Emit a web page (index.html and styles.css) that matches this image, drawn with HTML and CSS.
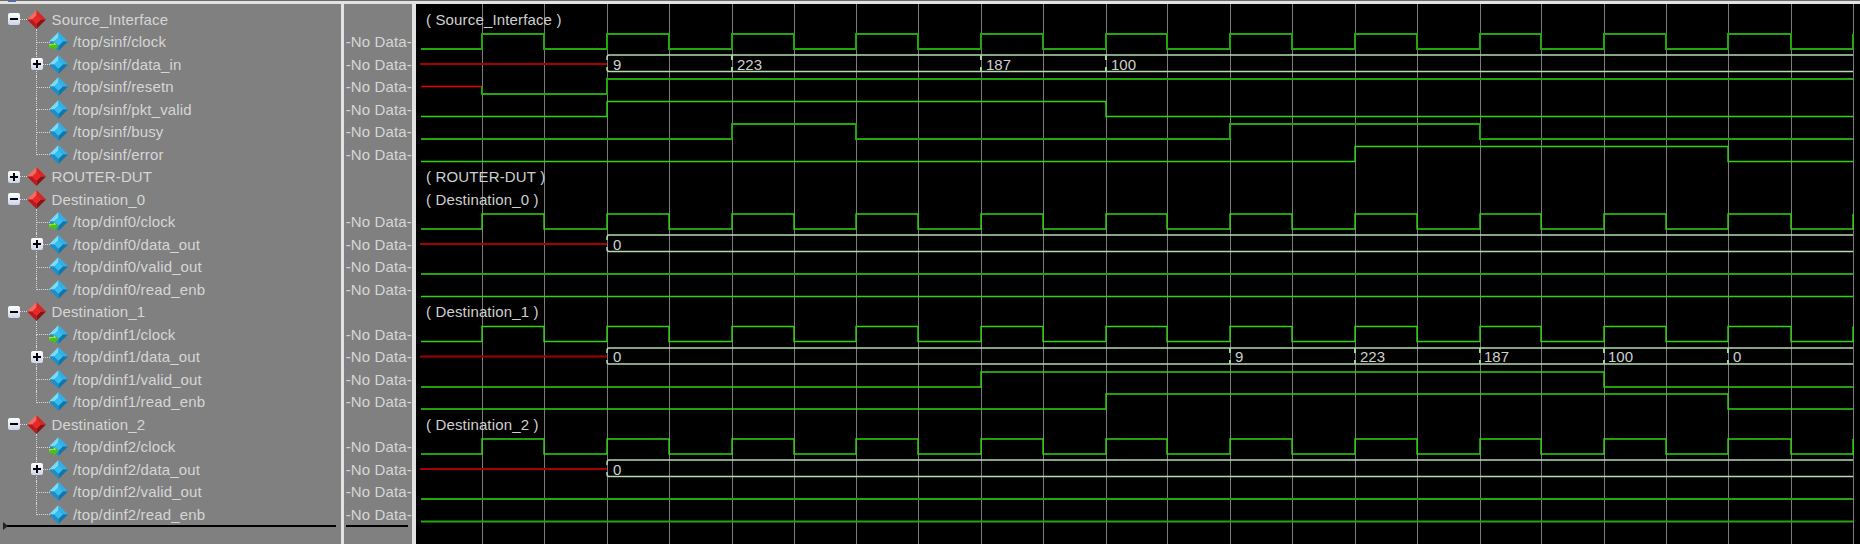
FILE: index.html
```html
<!DOCTYPE html>
<html lang="en">
<head>
  <meta charset="UTF-8" />
  <title>Wave</title>
  <link rel="stylesheet" href="styles.css">
</head>
<body>

  <svg class="sprite" xmlns="http://www.w3.org/2000/svg">
    <symbol id="group-icon" viewBox="0 0 18 18">
      <polygon points="9,0 0,9 5,9 9,5" fill="#f26a62" />
      <polygon points="9,0 18,9 13,9 9,5" fill="#dc2420" />
      <polygon points="18,9 9,18 9,13 13,9" fill="#8e1012" />
      <polygon points="0,9 9,18 9,13 5,9" fill="#bc181a" />
      <polygon points="9,5 13,9 9,13 5,9" fill="#ee2426" />
    </symbol>
    <symbol id="signal-icon" viewBox="0 0 18 18">
      <polygon points="9,0 0,9 5,9 9,5" fill="#78dcf8" />
      <polygon points="9,0 18,9 13,9 9,5" fill="#2cb2ea" />
      <polygon points="18,9 9,18 9,13 13,9" fill="#0f76ae" />
      <polygon points="0,9 9,18 9,13 5,9" fill="#1a90c8" />
      <polygon points="9,5 13,9 9,13 5,9" fill="#30c0f8" />
    </symbol>
    <symbol id="clock-icon" viewBox="0 0 18 18">
      <use href="#signal-icon" />
      <polygon points="0,11.5 4.5,11.5 4.5,9.5 9,13.5 4.5,17.5 4.5,15.5 0,15.5" fill="#46c414" />
      <polygon points="0,11.5 4.5,11.5 4.5,9.5 7,11.8 0,12.8" fill="#c8e838" />
    </symbol>
    <path id="clock" d="M421 49H482V34H544V49H607V34H669V49H732V34H794V49H856V34H918V49H981V34H1043V49H1106V34H1167V49H1230V34H1292V49H1355V34H1417V49H1480V34H1541V49H1604V34H1666V49H1728V34H1791V49H1853V34" />
  </svg>

  <div class="topbar"><span class="topbar-mark"></span></div>

  <div class="panes">

    <div class="names">
      <ul class="tree">
        <li>
          <div class="row group"><span class="toggle open"></span><span class="stub"></span><svg class="icon"><use href="#group-icon" /></svg><span>Source_Interface</span></div>
          <ul class="signals">
            <li class="row"><svg class="icon"><use href="#clock-icon" /></svg><span>/top/sinf/clock</span></li>
            <li class="row"><span class="toggle bus"></span><svg class="icon"><use href="#signal-icon" /></svg><span>/top/sinf/data_in</span></li>
            <li class="row"><svg class="icon"><use href="#signal-icon" /></svg><span>/top/sinf/resetn</span></li>
            <li class="row"><svg class="icon"><use href="#signal-icon" /></svg><span>/top/sinf/pkt_valid</span></li>
            <li class="row"><svg class="icon"><use href="#signal-icon" /></svg><span>/top/sinf/busy</span></li>
            <li class="row"><svg class="icon"><use href="#signal-icon" /></svg><span>/top/sinf/error</span></li>
          </ul>
        </li>
        <li>
          <div class="row group"><span class="toggle"></span><span class="stub"></span><svg class="icon"><use href="#group-icon" /></svg><span>ROUTER-DUT</span></div>
        </li>
        <li>
          <div class="row group"><span class="toggle open"></span><span class="stub"></span><svg class="icon"><use href="#group-icon" /></svg><span>Destination_0</span></div>
          <ul class="signals">
            <li class="row"><svg class="icon"><use href="#clock-icon" /></svg><span>/top/dinf0/clock</span></li>
            <li class="row"><span class="toggle bus"></span><svg class="icon"><use href="#signal-icon" /></svg><span>/top/dinf0/data_out</span></li>
            <li class="row"><svg class="icon"><use href="#signal-icon" /></svg><span>/top/dinf0/valid_out</span></li>
            <li class="row"><svg class="icon"><use href="#signal-icon" /></svg><span>/top/dinf0/read_enb</span></li>
          </ul>
        </li>
        <li>
          <div class="row group"><span class="toggle open"></span><span class="stub"></span><svg class="icon"><use href="#group-icon" /></svg><span>Destination_1</span></div>
          <ul class="signals">
            <li class="row"><svg class="icon"><use href="#clock-icon" /></svg><span>/top/dinf1/clock</span></li>
            <li class="row"><span class="toggle bus"></span><svg class="icon"><use href="#signal-icon" /></svg><span>/top/dinf1/data_out</span></li>
            <li class="row"><svg class="icon"><use href="#signal-icon" /></svg><span>/top/dinf1/valid_out</span></li>
            <li class="row"><svg class="icon"><use href="#signal-icon" /></svg><span>/top/dinf1/read_enb</span></li>
          </ul>
        </li>
        <li>
          <div class="row group"><span class="toggle open"></span><span class="stub"></span><svg class="icon"><use href="#group-icon" /></svg><span>Destination_2</span></div>
          <ul class="signals">
            <li class="row"><svg class="icon"><use href="#clock-icon" /></svg><span>/top/dinf2/clock</span></li>
            <li class="row"><span class="toggle bus"></span><svg class="icon"><use href="#signal-icon" /></svg><span>/top/dinf2/data_out</span></li>
            <li class="row"><svg class="icon"><use href="#signal-icon" /></svg><span>/top/dinf2/valid_out</span></li>
            <li class="row"><svg class="icon"><use href="#signal-icon" /></svg><span>/top/dinf2/read_enb</span></li>
          </ul>
        </li>
      </ul>
      <div class="insert-line names-line"></div>
    </div>

    <div class="values">
      <div class="row"></div>
      <div class="row">-No Data-</div>
      <div class="row">-No Data-</div>
      <div class="row">-No Data-</div>
      <div class="row">-No Data-</div>
      <div class="row">-No Data-</div>
      <div class="row">-No Data-</div>
      <div class="row"></div>
      <div class="row"></div>
      <div class="row">-No Data-</div>
      <div class="row">-No Data-</div>
      <div class="row">-No Data-</div>
      <div class="row">-No Data-</div>
      <div class="row"></div>
      <div class="row">-No Data-</div>
      <div class="row">-No Data-</div>
      <div class="row">-No Data-</div>
      <div class="row">-No Data-</div>
      <div class="row"></div>
      <div class="row">-No Data-</div>
      <div class="row">-No Data-</div>
      <div class="row">-No Data-</div>
      <div class="row">-No Data-</div>
      <div class="insert-line values-line"></div>
    </div>

    <!-- viewBox uses page coordinates, x = cursor ticks every half clock -->
    <svg class="waves" viewBox="416 4 1444 540" xmlns="http://www.w3.org/2000/svg">
      <path class="grid" d="M482.5 4V544M544.5 4V544M607.5 4V544M669.5 4V544M732.5 4V544M794.5 4V544M856.5 4V544M918.5 4V544M981.5 4V544M1043.5 4V544M1106.5 4V544M1167.5 4V544M1230.5 4V544M1292.5 4V544M1355.5 4V544M1417.5 4V544M1480.5 4V544M1541.5 4V544M1604.5 4V544M1666.5 4V544M1728.5 4V544M1791.5 4V544M1853.5 4V544" />

      <!-- Source_Interface -->
      <text class="label" x="426" y="24.5">( Source_Interface )</text>
      <use class="wire dim" href="#clock" />
      <path class="red dark" d="M420 64H607" />
      <path class="bus" d="M609 55H1853M609 71.5H1853M609 55Q607 55 607 58V60M607 67V69Q607 71.5 609 71.5" />
      <path class="tick" d="M732 55V60M732 67V71.5M981 55V60M981 67V71.5M1106 55V60M1106 67V71.5" />
      <text class="value" x="613" y="69.5">9</text>
      <text class="value" x="737" y="69.5">223</text>
      <text class="value" x="986" y="69.5">187</text>
      <text class="value" x="1111" y="69.5">100</text>
      <path class="red" d="M421 86.5H482" />
      <path class="wire dim" d="M482 86.5V94H607V79H1853" />
      <path class="wire" d="M421 116.5H607V101.5H1106V116.5H1853" />
      <path class="wire dim" d="M421 139H732V124H856V139H1230V124H1480V139H1853" />
      <path class="wire" d="M421 161.5H1355V146.5H1728V161.5H1853" />

      <text class="label" x="426" y="182">( ROUTER-DUT )</text>

      <!-- Destination_0 -->
      <text class="label" x="426" y="204.5">( Destination_0 )</text>
      <use class="wire" href="#clock" y="180" />
      <path class="red dark" d="M420 244H607" />
      <path class="bus" d="M609 235H1853M609 251.5H1853M609 235Q607 235 607 238V240M607 247V249Q607 251.5 609 251.5" />
      <text class="value" x="613" y="249.5">0</text>
      <path class="wire dim" d="M421 274H1853" />
      <path class="wire" d="M421 296.5H1853" />

      <!-- Destination_1 -->
      <text class="label" x="426" y="317">( Destination_1 )</text>
      <use class="wire" href="#clock" y="292.5" />
      <path class="red dark" d="M420 356.5H607" />
      <path class="bus" d="M609 348H1853M609 364H1853M609 348Q607 348 607 351V353M607 360V362Q607 364 609 364" />
      <path class="tick" d="M1230 348V353M1230 360V364M1355 348V353M1355 360V364M1480 348V353M1480 360V364M1604 348V353M1604 360V364M1728 348V353M1728 360V364" />
      <text class="value" x="613" y="362">0</text>
      <text class="value" x="1235" y="362">9</text>
      <text class="value" x="1360" y="362">223</text>
      <text class="value" x="1484" y="362">187</text>
      <text class="value" x="1608" y="362">100</text>
      <text class="value" x="1733" y="362">0</text>
      <path class="wire" d="M421 387H981V372H1604V387H1853" />
      <path class="wire" d="M421 409H1106V394H1728V409H1853" />

      <!-- Destination_2 -->
      <text class="label" x="426" y="429.5">( Destination_2 )</text>
      <use class="wire" href="#clock" y="405" />
      <path class="red dark" d="M420 469H607" />
      <path class="bus" d="M609 460H1853M609 476.5H1853M609 460Q607 460 607 463V465M607 472V474Q607 476.5 609 476.5" />
      <text class="value" x="613" y="474.5">0</text>
      <path class="wire dim" d="M421 499H1853" />
      <path class="wire dim" d="M421 521.5H1853" />
    </svg>

  </div>

</body>
</html>
```

FILE: styles.css
```css
body {
  margin: 0;
  height: 544px;
  overflow: hidden;
  background: #808080;
  color: #d6d6d6;
  font-family: "Liberation Sans", Arial, sans-serif;
  font-size: 15px;
  letter-spacing: 0.15px;
}

ul {
  list-style: none;
  margin: 0;
  padding: 0;
}

.sprite {
  display: none;
}

.topbar {
  height: 3px;
  padding-left: 8px;
  background: #e2e2e2;
  border-top: 1px solid #6a6a6a;
}

.topbar-mark {
  display: block;
  width: 8px;
  height: 1px;
  background: #3f6fd8;
}

.panes {
  display: flex;
  height: 540px;
}

.names {
  width: 341px;
  padding-top: 4px;
}

.values {
  width: 68px;
  padding-top: 4px;
  border-left: 3px solid #e2e2e2;
  border-right: 4px solid #e2e2e2;
  text-align: right;
  white-space: nowrap;
}

.row {
  display: flex;
  align-items: center;
  justify-content: flex-end;
  height: 22.5px;
}

.names .row {
  justify-content: flex-start;
  padding-left: 49px;
  gap: 6px;
}

.names .group {
  padding-left: 8px;
  gap: 0;
}

.group .icon {
  margin-right: 6px;
}

.icon {
  flex: none;
  width: 19px;
  height: 19px;
  margin: 0 -0.5px;
}

.stub {
  width: 7px;
  border-top: 1px dotted #d8d8d8;
}

.toggle {
  flex: none;
  display: grid;
  place-items: center;
  width: 12px;
  height: 12px;
  border-radius: 2px;
  background: linear-gradient(#ffffff, #ccd4ec);
  z-index: 1;
}

.toggle::before,
.toggle::after {
  content: "";
  grid-area: 1 / 1;
  background: #000;
}

.toggle::before {
  width: 8px;
  height: 2px;
}

.toggle::after {
  width: 2px;
  height: 8px;
}

.toggle.open::after {
  display: none;
}

.toggle.bus {
  position: absolute;
  left: 31px;
  top: 5px;
}

/* dotted tree lines */
.signals li {
  position: relative;
}

.signals li::before {
  content: "";
  position: absolute;
  left: 36px;
  top: 0;
  width: 13px;
  height: 11px;
  border-left: 1px dotted #d8d8d8;
  border-bottom: 1px dotted #d8d8d8;
}

.signals li:first-child::before {
  top: -2px;
  height: 13px;
}

.signals li:not(:last-child)::after {
  content: "";
  position: absolute;
  left: 36px;
  top: 11px;
  bottom: 0;
  border-left: 1px dotted #d8d8d8;
}

.insert-line {
  height: 2px;
  margin-top: -1px;
  background: #000;
}

.names-line {
  position: relative;
  margin-left: 5px;
  margin-right: 5px;
}

.names-line::before {
  content: "";
  position: absolute;
  left: -2px;
  top: -3px;
  border-left: 5px solid #222;
  border-top: 4px solid transparent;
  border-bottom: 4px solid transparent;
}

.values-line {
  margin-left: 2px;
  margin-right: 4px;
}

.waves {
  flex: 1;
  width: 1444px;
  height: 540px;
  background: #000;
}

.grid {
  stroke: #7c7c7c;
  stroke-width: 1;
  fill: none;
}

.wire {
  fill: none;
  stroke: #2fd40f;
  stroke-width: 1.4;
}

.wire.dim {
  stroke: #22a80c;
  stroke-width: 2;
}

.red {
  fill: none;
  stroke: #e80000;
  stroke-width: 1.5;
}

.red.dark {
  stroke: #a80000;
  stroke-width: 2;
}

.bus {
  fill: none;
  stroke: #b4dcb0;
  stroke-width: 1.5;
}

.tick {
  fill: none;
  stroke: #9cd898;
  stroke-width: 2;
}

.label,
.value {
  fill: #d0d0d0;
  font-size: 15px;
}

.value {
  letter-spacing: 0;
}
```
